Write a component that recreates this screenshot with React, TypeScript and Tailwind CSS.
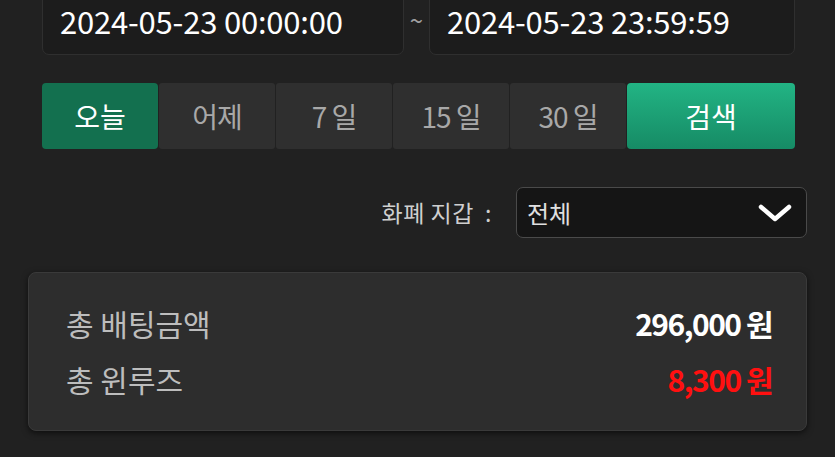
import React from "react";

const font = { fontFamily: '"Noto Sans CJK KR", "Noto Sans", sans-serif' };

export default function App() {
  const ranges = ["오늘", "어제", "7 일", "15 일", "30 일"];
  return (
    <div
      className="w-[835px] h-[457px] overflow-hidden bg-[#212121] px-[28px]"
      style={font}
    >
      <div className="pl-[14px] pr-[12px]">
        <div className="flex items-center -mt-[12px] h-[67px]">
          <div className="flex-1 h-full rounded-[7px] border border-[#2f2f2f] bg-[#1c1c1c] flex items-center pl-[17px] pb-[3px]">
            <span className="text-[31px] text-white leading-none tracking-[-0.2px]">
              2024-05-23 00:00:00
            </span>
          </div>
          <div className="w-[25px] flex justify-center text-[#a0a0a0] text-[24px] leading-none pb-[4px]">~</div>
          <div className="w-[366px] h-full rounded-[7px] border border-[#2f2f2f] bg-[#1c1c1c] flex items-center pl-[17px] pb-[3px]">
            <span className="text-[31px] text-white leading-none tracking-[-0.2px]">
              2024-05-23 23:59:59
            </span>
          </div>
        </div>

        <div className="flex mt-[28px] h-[66px] gap-px">
          {ranges.map((r, i) => (
            <button
              key={r}
              className={
                i === 0
                  ? "w-[116px] rounded-[4px] bg-[#13704f] text-white text-[28px] flex items-center justify-center"
                  : "w-[116px] rounded-[3px] bg-[#2f2f2f] text-[#a8a8a8] text-[28px] flex items-center justify-center tracking-[-1px]"
              }
            >
              {r}
            </button>
          ))}
          <button className="flex-1 rounded-[4px] bg-gradient-to-b from-[#22b484] to-[#168b65] text-white text-[28px] flex items-center justify-center">
            검색
          </button>
        </div>
      </div>

      <div className="flex items-center justify-end mt-[38px]">
        <span className="text-[23px] text-[#cfcfcf] mr-[24px] tracking-[0.5px]">
          화폐 지갑&nbsp;&nbsp;:
        </span>
        <div className="w-[291px] h-[51px] rounded-[7px] border-[1.5px] border-[#4a4a4a] bg-[#151515] flex items-center justify-between pl-[10px] pr-[14px]">
          <span className="text-[24px] text-[#e0e0e0]">전체</span>
          <svg width="34" height="22" viewBox="0 0 34 22" fill="none">
            <path
              d="M3 5 L17 17 L31 5"
              stroke="white"
              strokeWidth="4.5"
              strokeLinecap="round"
              strokeLinejoin="round"
            />
          </svg>
        </div>
      </div>

      <div className="mt-[34px] h-[159px] rounded-[8px] border border-[#3a3a3a] bg-[#2d2d2d] shadow-[0_2px_6px_rgba(0,0,0,0.6)] pl-[37px] pr-[34px] pt-[28px] flex flex-col gap-[12px]">
        <div className="flex items-center justify-between h-[44px]">
          <span className="text-[30px] text-[#bdbdbd]">총 배팅금액</span>
          <span className="text-[30px] font-bold text-white tracking-[-1.5px]">296,000 원</span>
        </div>
        <div className="flex items-center justify-between h-[44px]">
          <span className="text-[30px] text-[#bdbdbd]">총 윈루즈</span>
          <span className="text-[30px] font-bold text-[#ff1010] tracking-[-1.5px]">8,300 원</span>
        </div>
      </div>
    </div>
  );
}
